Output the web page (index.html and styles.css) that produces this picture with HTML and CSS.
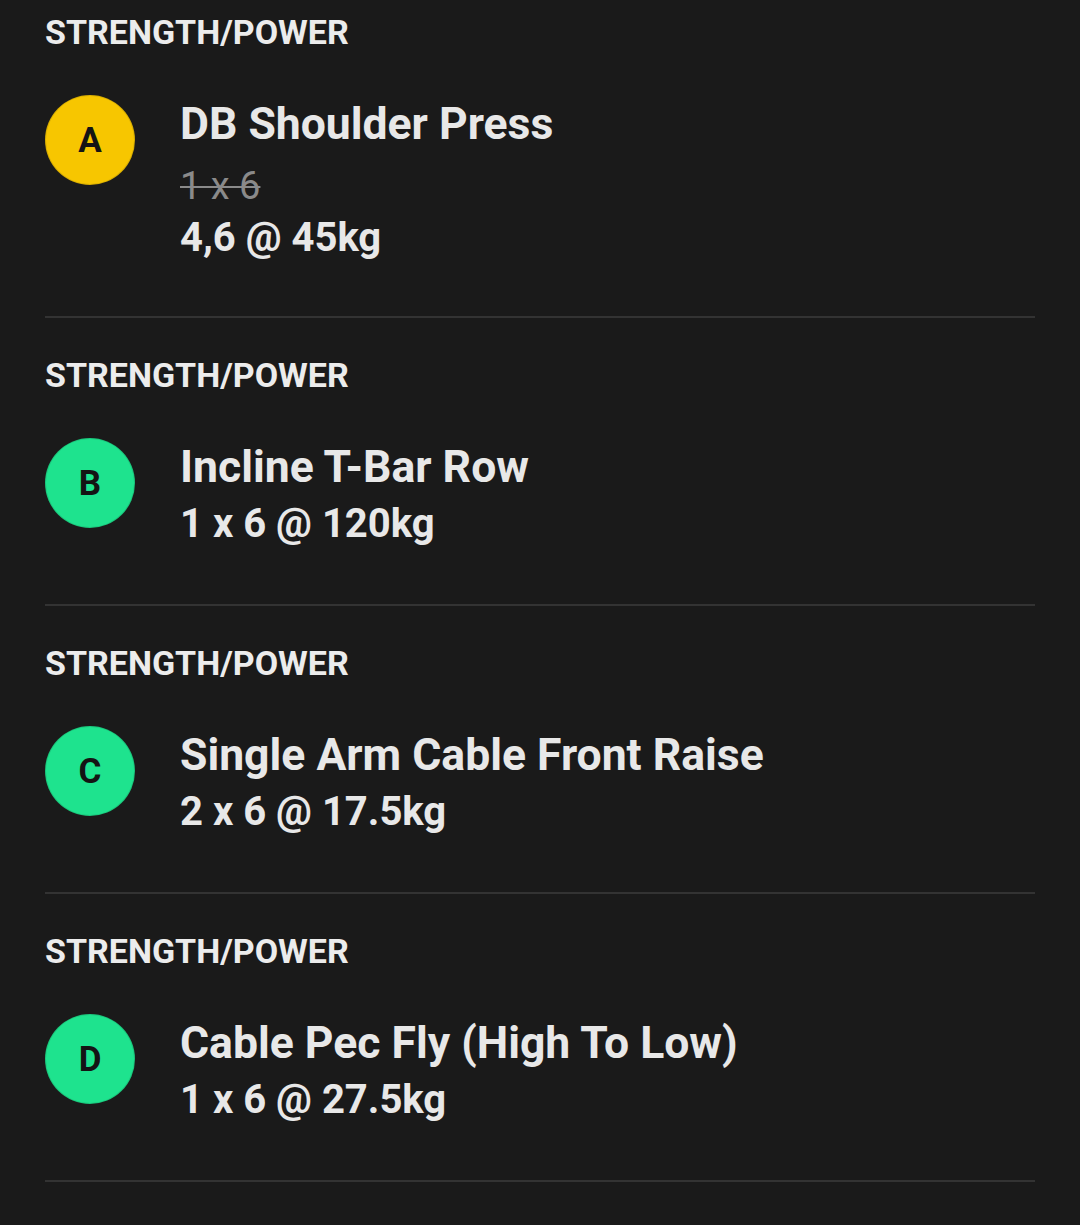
FILE: index.html
```html
<!DOCTYPE html>
<html>
<head>
<meta charset="utf-8">
<link rel="stylesheet" href="styles.css">
</head>
<body>
<div class="list">
  <section class="block first">
    <div class="cat">STRENGTH/POWER</div>
    <div class="row">
      <div class="badge yellow">A</div>
      <div class="info">
        <div class="title">DB Shoulder Press</div>
        <div class="strike">1 x 6</div>
        <div class="sub">4,6 @ 45kg</div>
      </div>
    </div>
  </section>
  <section class="block">
    <div class="cat">STRENGTH/POWER</div>
    <div class="row">
      <div class="badge green">B</div>
      <div class="info">
        <div class="title">Incline T-Bar Row</div>
        <div class="sub">1 x 6 @ 120kg</div>
      </div>
    </div>
  </section>
  <section class="block">
    <div class="cat">STRENGTH/POWER</div>
    <div class="row">
      <div class="badge green">C</div>
      <div class="info">
        <div class="title">Single Arm Cable Front Raise</div>
        <div class="sub">2 x 6 @ 17.5kg</div>
      </div>
    </div>
  </section>
  <section class="block">
    <div class="cat">STRENGTH/POWER</div>
    <div class="row">
      <div class="badge green">D</div>
      <div class="info">
        <div class="title">Cable Pec Fly (High To Low)</div>
        <div class="sub">1 x 6 @ 27.5kg</div>
      </div>
    </div>
  </section>
</div>
</body>
</html>
```
FILE: styles.css
```css
html, body {
  margin: 0;
  padding: 0;
  background: #1a1a1a;
  height: 100%;
}
body {
  font-family: Roboto, "Noto Sans", sans-serif;
  color: #e8e8e8;
  overflow: hidden;
}
.list {
  padding: 0 45px;
}
.block {
  padding: 39px 0 52px;
  border-bottom: 2px solid #333333;
}
.block.first {
  padding-top: 14px;
  padding-bottom: 50px;
}
.cat {
  font-size: 34px;
  font-weight: 700;
  line-height: 36px;
  color: #ececec;
}
.row {
  display: flex;
  align-items: flex-start;
  gap: 45px;
  margin-top: 45px;
}
.badge {
  flex: none;
  width: 90px;
  height: 90px;
  box-sizing: border-box;
  border-radius: 50%;
  border: 1px solid rgba(0, 0, 0, 0.12);
  display: flex;
  align-items: center;
  justify-content: center;
  font-size: 35px;
  font-weight: 700;
  color: #141414;
}
.yellow { background: #f7c600; }
.green { background: #1ee38e; }
.info {
  display: flex;
  flex-direction: column;
}
.title {
  font-size: 44.5px;
  font-weight: 700;
  line-height: 58px;
  color: #e8e8e8;
}
.strike {
  margin-top: 9px;
  font-size: 38px;
  line-height: 48px;
  color: #8a8a8a;
  text-decoration: line-through;
  text-decoration-thickness: 2px;
}
.sub {
  font-size: 40px;
  font-weight: 700;
  line-height: 56px;
  color: #e8e8e8;
}
```
